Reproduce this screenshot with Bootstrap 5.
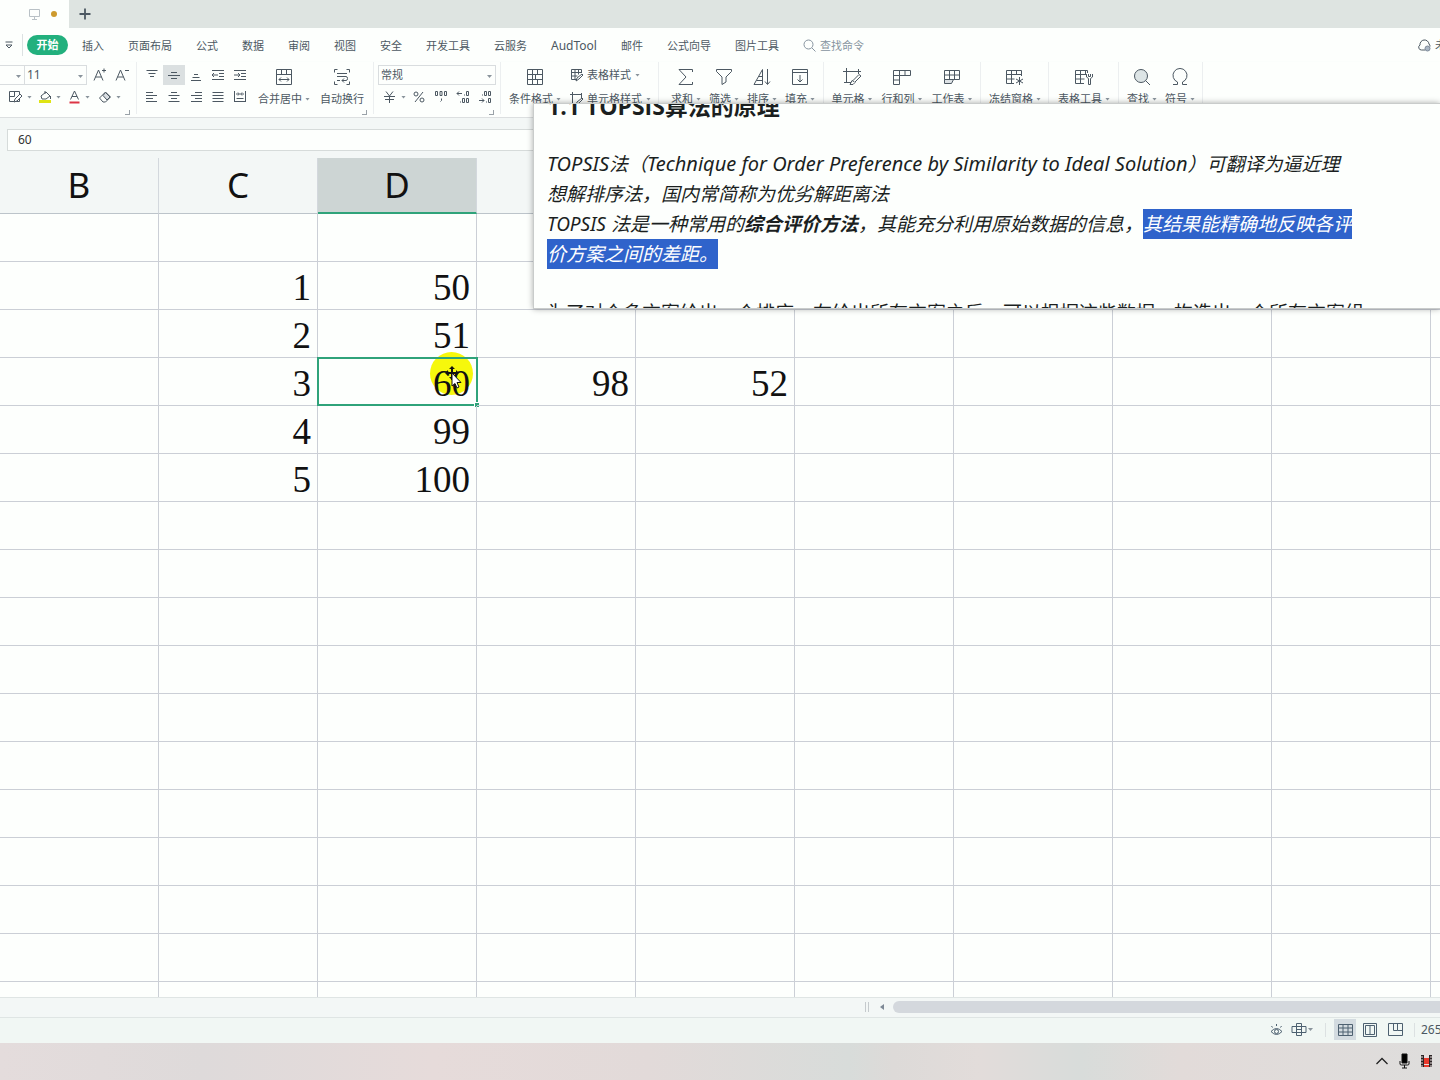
<!DOCTYPE html>
<html lang="zh-CN">
<head>
<meta charset="utf-8">
<meta name="viewport" content="width=device-width, initial-scale=1">
<title>表格</title>
<link href="https://cdn.jsdelivr.net/npm/bootstrap@5.3.0/dist/css/bootstrap.min.css" rel="stylesheet">
<script src="https://cdn.jsdelivr.net/npm/bootstrap@5.3.0/dist/js/bootstrap.bundle.min.js"></script>
<style>
body{font-family:"Noto Sans","Noto Sans CJK SC",sans-serif;font-size:11px;line-height:16px;color:#4c5862;background:#fdfffd;overflow:hidden}
button{background:none;border:0;padding:0;color:inherit;font:inherit;white-space:nowrap}
svg{fill:none;stroke:#4c5862;stroke-width:1;flex:none;display:block}
.tabstrip{height:28px;background:#dee4e1}
.doc-tab{width:69px;height:28px;background:#fdfffd;padding-left:28px;gap:10px}
.dot{width:6px;height:6px;border-radius:50%;background:#cd9a2e}
.menubar{height:34px}
.menubar a{color:#4c5862;text-decoration:none;white-space:nowrap}
.menubar .home{background:#22b07d;color:#fff;font-weight:700;border-radius:10px;height:20px;line-height:20px;width:41px;text-align:center;margin:0 14px 0 4px}
.menu-list{gap:24px;padding-top:1px}
.latin{font-size:12px}
.find-cmd{border:0;background:none;width:90px;padding:0;font-size:11px;color:#8794a0;outline:0}
.find-cmd::placeholder{color:#8794a0;opacity:1}
.ribbon{height:56px;border-bottom:1px solid #dcdfe0;box-shadow:0 1px 2px #e4e8e7}
.grp{position:relative;height:52px;padding-top:2px;border-right:1px solid #eceff0;flex:none}
.corner{position:absolute;right:6px;bottom:-1px;width:5px;height:5px;border:solid #9aa2a8;border-width:0 1px 1px 0}
.caret{width:5px;height:3px;background:#8a949c;clip-path:polygon(0 0,100% 0,50% 100%);flex:none;display:inline-block}
.combo{position:relative;height:20px;border:1px solid #d9dddf}
.combo select{appearance:none;border:0;background:none;width:100%;height:18px;padding:0 2px;font-size:11px;color:#4c5862;display:block}
.combo .latin{font-size:12px}
.combo .caret{position:absolute;right:3px;top:9px;pointer-events:none}
.line2{height:22px}
.tool{width:22px;height:20px;display:flex;align-items:center;justify-content:center;flex:none}
.tool.on{background:#dbe0e1}
.pair{width:30px;height:20px;display:flex;align-items:center;gap:4px;flex:none}
.pair.slim{width:26px}
.big{display:flex;flex-direction:column;align-items:center;gap:5px;padding-top:4px;flex:none;height:50px}
.big span.cap{display:flex;align-items:center;gap:3px}
.w2{width:38px}.w3{width:50px}.w4{width:66px}
.formula{height:40px;background:#f3f7f6;padding:11px 0 0 7px}
.formula input{height:22px;border:1px solid #d6dbda;background:#fdfffd;padding:0 10px 2px;font-size:12px;color:#333;border-radius:0;outline:0}
.gridwrap{overflow:hidden;min-height:0}
.sheet{table-layout:fixed;width:1590px;border-collapse:separate;border-spacing:0}
.sheet th{height:56px;width:159px;background:#f3f7f6;border-right:1px solid #d3d8dd;border-bottom:1px solid #bcc4ca;font-weight:400;font-size:35px;line-height:54px;vertical-align:top;padding:0;text-align:center;color:#111}
.sheet th.on{background:#cdd5d4;border-bottom:2px solid #2fa37a}
.sheet td{height:48px;border-right:1px solid #cbcfd6;border-bottom:1px solid #cbcfd6;padding:4px 6px 0 0;text-align:right;font:37px/42px "Liberation Serif",serif;color:#111;position:relative}
.sheet td>span{position:relative}
.cellbox{position:absolute;inset:-1px -2px -1px -1px;border:2px solid #2fa37a;pointer-events:none}
.cellbox::after{content:"";position:absolute;right:-3px;bottom:-3px;width:5px;height:5px;background:#2fa37a;border:solid #fff;border-width:1px 0 0 1px}
.halo{position:absolute;left:112px;top:-6px;width:43px;height:43px;border-radius:50%;background:#f6f80c}
.pointer{position:absolute;left:126px;top:7px}
.hscroll{height:21px;background:#f3f7f6;border:solid #dfe5e4;border-width:1px 0;padding-bottom:2px}
.grip{width:4px;height:10px;border:solid #c5cacd;border-width:0 1px;margin-right:5px}
.thumb{width:547px;height:12px;background:#d4d8dd;border-radius:6px 0 0 6px}
.status{height:25px;background:#f1f7f4;padding-bottom:2px}
.status svg{stroke:#4d6070}
.vsep{width:1px;height:14px;background:#dce1e2}
.view{width:22px;height:21px;display:flex;align-items:center;justify-content:center}
.view.on{background:#d3dbe0}
.zoomval{width:19px;overflow:hidden;font-size:12px;white-space:nowrap;margin-left:6px}
.taskbar{height:37px;background:linear-gradient(90deg,#e4dcdc 0,#dedada 14%,#e6dbda 30%,#e2dad9 45%,#d8dcda 59%,#dddad8 62%,#e2dcda 68%,#d8dcda 75%,#e2dbd9 82%,#dedddc 100%);gap:10px;padding:0 7px 2px 0}
.note{position:absolute;left:533px;right:0;top:103px;height:206px;background:#fdfffd;border:1px solid #c9cccb;border-right:0;box-shadow:0 0 6px #0005;overflow:hidden;z-index:5;padding-left:13px;color:#1b1f1f;white-space:nowrap}
.note h2{font:700 23px/30px "Open Sans","Noto Sans CJK SC",sans-serif;margin:-13px 0 28px}
.note p{font-size:19px;line-height:30px;margin:0 0 29px}
.note .en{font-size:20px;line-height:20px}
.picked{display:inline-block;height:30px;vertical-align:top;background:#2f63cb;color:#fff}
</style>
</head>
<body>
<div class="d-flex flex-column vh-100 position-relative overflow-hidden">
  <header class="tabstrip d-flex align-items-center">
    <div class="doc-tab d-flex align-items-center">
      <svg width="13" height="13" style="stroke:#b9c1c6"><path d="M1.500 1.500h10v7h-10zM6.500 8.500v3M4 11.500h5"/></svg>
      <span class="dot"></span>
    </div>
    <button class="ms-2" aria-label="新建"><svg width="16" height="16"><path d="M8 2.500v11M2.500 8h11" stroke-width="1.800"/></svg></button>
  </header>

  <nav class="menubar d-flex align-items-center flex-shrink-0">
    <button class="ps-1" aria-label="更多"><svg width="10" height="10"><path d="M1.500 2h7M2 5l3 3 3-3z"/></svg></button>
    <span class="vsep ms-2" style="height:22px"></span>
    <a href="#" class="home">开始</a>
    <div class="menu-list d-flex align-items-center">
      <a href="#">插入</a><a href="#">页面布局</a><a href="#">公式</a><a href="#">数据</a><a href="#">审阅</a><a href="#">视图</a><a href="#">安全</a><a href="#">开发工具</a><a href="#">云服务</a><a href="#" class="latin">AudTool</a><a href="#">邮件</a><a href="#">公式向导</a><a href="#">图片工具</a>
      <label class="d-flex align-items-center gap-1"><svg width="13" height="13" style="stroke:#8794a0"><circle cx="5.500" cy="5.500" r="4.500"/><path d="M9 9l3.500 3.500"/></svg><input class="find-cmd" placeholder="查找命令" aria-label="查找命令"></label>
    </div>
    <div class="ms-auto d-flex align-items-center gap-1 overflow-hidden" style="width:22px">
      <svg width="13" height="13"><path d="M7 11H3.500A2.700 2.700 0 0 1 2 6a4.500 4.500 0 0 1 9-1 3 3 0 0 1 1 2.500"/><circle cx="9.500" cy="9.500" r="2.500" fill="#a9b6c4" stroke="#7d8b9a"/></svg><span class="text-nowrap">未同步</span>
    </div>
  </nav>

  <section class="ribbon d-flex flex-shrink-0">
    <div class="grp" style="width:137px">
      <div class="line2 d-flex align-items-center">
        <div class="combo border-start-0" style="width:25px"><select aria-label="字体"><option></option></select><i class="caret"></i></div>
        <div class="combo border-start-0" style="width:62px"><select class="latin" aria-label="字号"><option>11</option></select><i class="caret"></i></div>
        <button class="tool" style="margin-left:2px" aria-label="增大字号"><svg width="14" height="14"><path d="M1 12.500L5.500 2 10 12.500M2.500 9h6M9 2.500h4M11 .5v4"/></svg></button>
        <button class="tool" aria-label="减小字号"><svg width="14" height="14"><path d="M1 12.500L5.500 2 10 12.500M2.500 9h6M10 2.500h4"/></svg></button>
      </div>
      <div class="line2 d-flex align-items-center ps-2">
        <button class="pair" aria-label="边框"><svg width="15" height="14"><path d="M1.500 1.500h10v10h-10zM1.500 6.500h5M6.500 1.500v5" /><path d="M6 12l1-3 5-5 2 2-5 5z" fill="#fff"/></svg><i class="caret"></i></button>
        <button class="pair" aria-label="填充色"><svg width="14" height="14"><path d="M3 6l5-4 4 4-4 3H4zM7 1v3M12.500 6v3"/><path d="M1 11.500h12" stroke="#dfe414" stroke-width="3"/></svg><i class="caret"></i></button>
        <button class="pair" aria-label="字体颜色"><svg width="13" height="14"><path d="M2.500 9.500L6.500 1l4 8.500M4 6.500h5"/><path d="M1.500 12.500h10" stroke="#dc3545" stroke-width="2"/></svg><i class="caret"></i></button>
        <button class="pair" aria-label="清除"><svg width="14" height="14"><path d="M1.500 8l6-6 5 5-5 5H5z"/><path d="M5 5.500l2.500-3 4.500 4.500-3 3z" fill="#d9dee2"/></svg><i class="caret"></i></button>
      </div>
      <i class="corner"></i>
    </div>

    <div class="grp d-flex" style="width:237px;padding-left:4px">
      <div>
        <div class="line2 d-flex align-items-center">
          <button class="tool" aria-label="顶端对齐"><svg width="14" height="14"><path d="M1.500 2.500h11M3.500 5.500h7M5 8.500h4"/></svg></button>
          <button class="tool on" aria-label="垂直居中"><svg width="14" height="14"><path d="M4 4.500h6M1 7.500h12M4 10.500h6"/></svg></button>
          <button class="tool" aria-label="底端对齐"><svg width="14" height="14"><path d="M5 6.500h4M3.500 9.500h7M2 12.500h10"/></svg></button>
          <button class="tool" aria-label="减少缩进"><svg width="14" height="14"><path d="M1 2.500h12M8 5.500h5M8 8.500h5M1 11.500h12M1 7h6M3 5L1 7l2 2"/></svg></button>
          <button class="tool" aria-label="增加缩进"><svg width="14" height="14"><path d="M1 2.500h12M8 5.500h5M8 8.500h5M1 11.500h12M1 7h6M5 5l2 2-2 2"/></svg></button>
        </div>
        <div class="line2 d-flex align-items-center">
          <button class="tool" aria-label="左对齐"><svg width="14" height="14"><path d="M1 2.500h7M1 5.500h11M1 8.500h7M1 11.500h11"/></svg></button>
          <button class="tool" aria-label="居中"><svg width="14" height="14"><path d="M4 2.500h6M1.500 5.500h11M4 8.500h6M1.500 11.500h11"/></svg></button>
          <button class="tool" aria-label="右对齐"><svg width="14" height="14"><path d="M6 2.500h7M2 5.500h11M6 8.500h7M2 11.500h11"/></svg></button>
          <button class="tool" aria-label="两端对齐"><svg width="14" height="14"><path d="M1.500 2.500h11M1.500 5.500h11M1.500 8.500h11M1.500 11.500h11"/></svg></button>
          <button class="tool" aria-label="分散对齐"><svg width="14" height="14"><path d="M1.500 1v11M12.500 1v11M1.500 11.500h11M3.500 8.500h7M3 4h3M8 4h3M5 2.500L6.500 4 5 5.500M9 2.500L7.500 4 9 5.500"/></svg></button>
        </div>
      </div>
      <button class="big w4"><svg width="18" height="18"><path d="M1.500 1.500h15v15h-15zM1.500 6.500h15M6.500 1.500v5M11.500 1.500v5M4 11.500h10M6 9.500l-2 2 2 2M12 9.500l2 2-2 2"/></svg><span class="cap">合并居中<i class="caret"></i></span></button>
      <button class="big w3"><svg width="18" height="18"><path d="M4.500 1.500h-3v3M13.500 1.500h3v3M4.500 16.500h-3v-3M13.500 16.500h3v-3M4 5.500h10M4 8.500h9q1.500 0 1.500 2t-1.500 2H9M11 10.500l-2 2 2 2M4 12.500h3"/></svg><span class="cap">自动换行</span></button>
      <i class="corner"></i>
    </div>

    <div class="grp" style="width:127px;padding-left:4px">
      <div class="line2 d-flex align-items-center"><div class="combo" style="width:118px"><select aria-label="数字格式"><option>常规</option></select><i class="caret"></i></div></div>
      <div class="line2 d-flex align-items-center ps-1">
        <button class="pair slim" aria-label="货币"><svg width="15" height="14"><path d="M4 1.500L7.500 6 11 1.500M2 6.500h11M3 9.500h9M7.500 6v7"/></svg><i class="caret"></i></button>
        <button class="tool" aria-label="百分比"><svg width="14" height="14"><circle cx="4" cy="4" r="2"/><circle cx="10" cy="10" r="2"/><path d="M11 2L3 12"/></svg></button>
        <button class="tool" aria-label="千位分隔"><svg width="14" height="14"><path d="M1.500 1.500h2v4h-2zM6 1.500h2v4H6zM10.500 1.500h2v4h-2zM7.500 8.500v2l-1 1"/></svg></button>
        <button class="tool" aria-label="增加小数"><svg width="14" height="14"><path d="M1 3.500h5M3 1.500l-2 2 2 2M10.500 1.500h2v4h-2zM6.500 8.500h2v4h-2zM10.500 8.500h2v4h-2zM8 5h1M4 12h1"/></svg></button>
        <button class="tool" aria-label="减少小数"><svg width="14" height="14"><path d="M6.500 1.500h2v4h-2zM10.500 1.500h2v4h-2zM10.500 8.500h2v4h-2zM4 5h1M1 10.500h5M4 8.500l2 2-2 2M8 12h1"/></svg></button>
      </div>
      <i class="corner"></i>
    </div>

    <div class="grp d-flex" style="width:158px;padding-left:1px">
      <button class="big w4"><svg width="18" height="18"><path d="M1.500 1.500h15v15h-15zM1.500 6.500h15M1.500 11.500h15M6.500 1.500v15M11.500 1.500v5M11.500 11.500v5M9.500 6.500v5"/></svg><span class="cap">条件格式<i class="caret"></i></span></button>
      <div style="padding-left:2px">
        <div class="line2 d-flex align-items-center"><button class="d-flex align-items-center gap-1"><svg width="13" height="14"><path d="M7 11.500H1.500v-10h10V5M1.500 4.500h10M1.500 8h6M5 1.500v10M8.500 1.500v5M6 13l1-3 5-4 1 1-4 4z"/></svg><span>表格样式</span><i class="caret"></i></button></div>
        <div class="line2 d-flex align-items-center"><button class="d-flex align-items-center gap-1 mt-1"><svg width="13" height="14"><path d="M2.500 0v11.500H7M0 2.500h12M11.500 1v5M6 13l1-3 5-4 1 1-4 4z"/></svg><span>单元格样式</span><i class="caret"></i></button></div>
      </div>
    </div>

    <div class="grp d-flex" style="width:165px;padding-left:8px">
      <button class="big w2"><svg width="18" height="18"><path d="M15.500 4V1.500H2L9 9l-7 7.500h13.500V14"/></svg><span class="cap">求和<i class="caret"></i></span></button>
      <button class="big w2"><svg width="18" height="18"><path d="M1.500 1.500h15v2L11 9v5l-4 2.500V9L1.500 3.500z"/></svg><span class="cap">筛选<i class="caret"></i></span></button>
      <button class="big w2"><svg width="18" height="18"><path d="M1 16.500L9.500 1.500v15zM3.500 12.500h6M6 8.500h3.500M14.500 1v15M12 13.500l2.500 3 2.500-3"/></svg><span class="cap">排序<i class="caret"></i></span></button>
      <button class="big w2"><svg width="18" height="18"><path d="M1.500 1.500h15v15h-15zM1.500 4.500h15M9 7v7M6.500 11.500L9 14l2.500-2.500"/></svg><span class="cap">填充<i class="caret"></i></span></button>
    </div>

    <div class="grp d-flex" style="width:157px;padding-left:3px">
      <button class="big w3"><svg width="20" height="18"><path d="M4.500 0v14.500H9M1 3.500h18M16.500 1v5M2 14.500h3"/><path d="M8 16.500l2-4 2 1 1 1-2 2zM11 12.500l6-6 2 1.500-6 6"/></svg><span class="cap">单元格<i class="caret"></i></span></button>
      <button class="big w3"><svg width="20" height="18"><path d="M1.500 2.500h17v5h-11v9h-6zM1.500 7.500h6M7.500 2.500v5M13 2.500v5M1.500 12h6"/></svg><span class="cap">行和列<i class="caret"></i></span></button>
      <button class="big w3"><svg width="18" height="18"><path d="M1.500 2.500h15v9h-15zM1.500 7h15M6.500 2.500v9M11.500 2.500v9"/><path d="M1.500 11.500h9l-2 4h-7z" fill="#dde2e5"/></svg><span class="cap">工作表<i class="caret"></i></span></button>
    </div>

    <div class="grp d-flex" style="width:68px;padding-left:1px">
      <button class="big w4"><svg width="20" height="18"><path d="M9 15.500H1.500v-13h15V8M1.500 6.500h15M1.500 11h8M6.500 2.500v13M11.500 2.500V7M14.500 9v8M11 11l7 4M18 11l-7 4"/></svg><span class="cap">冻结窗格<i class="caret"></i></span></button>
    </div>
    <div class="grp d-flex" style="width:70px;padding-left:2px">
      <button class="big w4"><svg width="20" height="18"><path d="M10 15.500H1.500v-13h12V5M1.500 6.500h10M1.500 11h9M6.500 2.500v13M11.500 2.500V7M12.500 6v3l2 1.500v6h2v-6l2-1.500V6M14.500 6v2.500h2V6"/></svg><span class="cap">表格工具<i class="caret"></i></span></button>
    </div>
    <div class="grp d-flex" style="width:84px;padding-left:4px">
      <button class="big w2"><svg width="18" height="18"><circle cx="8" cy="8" r="6.500" fill="#dde5e6"/><path d="M12.500 12.500L17 17"/></svg><span class="cap">查找<i class="caret"></i></span></button>
      <button class="big w2"><svg width="18" height="18"><path d="M2 16.500h4.500V14A7 7 0 1 1 11.500 14v2.500H16"/></svg><span class="cap">符号<i class="caret"></i></span></button>
    </div>
  </section>

  <div class="formula flex-shrink-0"><input class="w-100" aria-label="编辑栏" value="60"></div>

  <main class="gridwrap flex-fill">
    <table class="sheet">
      <thead><tr><th>B</th><th>C</th><th class="on">D</th><th></th><th></th><th></th><th></th><th></th><th></th><th></th></tr></thead>
      <tbody id="rows"></tbody>
    </table>
  </main>

  <div class="hscroll d-flex align-items-center justify-content-end flex-shrink-0">
    <span class="grip"></span>
    <button class="tool" style="width:15px" aria-label="向左滚动"><svg width="6" height="8"><path d="M5 1L1 4l4 3z" fill="#7e8996" stroke="none"/></svg></button>
    <span class="thumb ms-1"></span>
  </div>

  <footer class="status d-flex align-items-center justify-content-end flex-shrink-0">
    <button aria-label="护眼模式" class="me-2"><svg width="13" height="14"><path d="M1 8.500q5.500-6 11 0-5.500 6-11 0zM1.500 3l1 1.500M6.500 1v2M11.500 3l-1 1.500"/><circle cx="6.500" cy="8.500" r="2"/></svg></button>
    <button aria-label="阅读模式" class="d-flex align-items-center me-2"><svg width="17" height="14"><path d="M5.500.5h5v12h-5zM1 3.500h14v6H1zM5.500 6.500h5"/></svg><i class="caret"></i></button>
    <span class="vsep ms-1 me-2"></span>
    <button class="view on" aria-label="普通视图"><svg width="15" height="14"><path d="M.5 1.500h14v11H.5zM.5 5h14M.5 9h14M5 1.500v11M10 1.500v11"/></svg></button>
    <button class="view ms-1" style="width:20px" aria-label="页面布局"><svg width="14" height="14"><path d="M.5.5h13v13H.5zM2.500 2.500h9v9h-9zM7 2.500v9"/></svg></button>
    <button class="view ms-1" aria-label="分页预览"><svg width="15" height="14"><path d="M.5.5h14v12H.5zM5.500.5v7h4v-7M9.500 7.500h5"/></svg></button>
    <span class="vsep ms-2"></span>
    <span class="zoomval">265%</span>
  </footer>

  <div class="taskbar d-flex align-items-center justify-content-end flex-shrink-0">
    <button aria-label="显示隐藏的图标"><svg width="14" height="14"><path d="M1.500 10L7 4.500l5.500 5.500" stroke="#222" stroke-width="1.300"/></svg></button>
    <svg width="11" height="16" style="stroke:#111"><path d="M3 1h5v9H3z" fill="#000"/><path d="M1 8v3q0 1 1.500 1h6q1.500 0 1.500-1V8M5.500 12v3M3 15h5"/></svg>
    <svg width="13" height="14" style="stroke:none"><path d="M1 1h11v12H1z" fill="#2b2526"/><path d="M4 1h5v12H4z" fill="#e8dcdc"/><path d="M4 4h5v6H4zM4 11h5v2H4z" fill="#e8392c"/><path d="M1 3h2M10 3h2M1 6h2M10 6h2M1 9h2M10 9h2M1 12h2M10 12h2" stroke="#e8dcdc"/></svg>
  </div>

  <article class="note">
    <h2>1.1 TOPSIS算法的原理</h2>
    <p class="fst-italic"><span class="en">TOPSIS</span>法（<span class="en">Technique for Order Preference by Similarity to Ideal Solution</span>）可翻译为逼近理<br>想解排序法，国内常简称为优劣解距离法<br>TOPSIS 法是一种常用的<b>综合评价方法</b>，其能充分利用原始数据的信息，<span class="picked">其结果能精确地反映各评</span><br><span class="picked">价方案之间的差距。</span></p>
    <p>为了对众多方案给出一个排序，在给出所有方案之后，可以根据这些数据，构造出一个所有方案组</p>
  </article>
</div>
<script>
// Values by row: columns B, C, D, E, F
const values = [[], ['', 1, 50], ['', 2, 51], ['', 3, 60, 98, 52], ['', 4, 99], ['', 5, 100]];
const body = document.getElementById('rows');
for (let r = 0; r < 18; r++) {
  const tr = body.insertRow();
  for (let c = 0; c < 10; c++) {
    const td = tr.insertCell();
    const v = (values[r] || [])[c];
    const active = r === 3 && c === 2;
    if (active) td.innerHTML = '<i class="halo"></i><div class="cellbox"></div>';
    if (v) { const s = document.createElement('span'); s.textContent = v; td.append(s); }
    if (active) td.insertAdjacentHTML('beforeend', '<svg class="pointer" width="22" height="26" style="stroke:#111"><path d="M8 2v13M2 8h12" stroke-width="2"/><path d="M8 1l3 3H5zM8 15l3-3H5zM1 8l3-3v6zM15 8l-3-3v6z" fill="#111" stroke="none"/><path d="M8 8v13l3-2.500 2 4.500 2-1-2-4.500h4z" fill="#fff"/></svg>');
  }
}
</script>
</body>
</html>
